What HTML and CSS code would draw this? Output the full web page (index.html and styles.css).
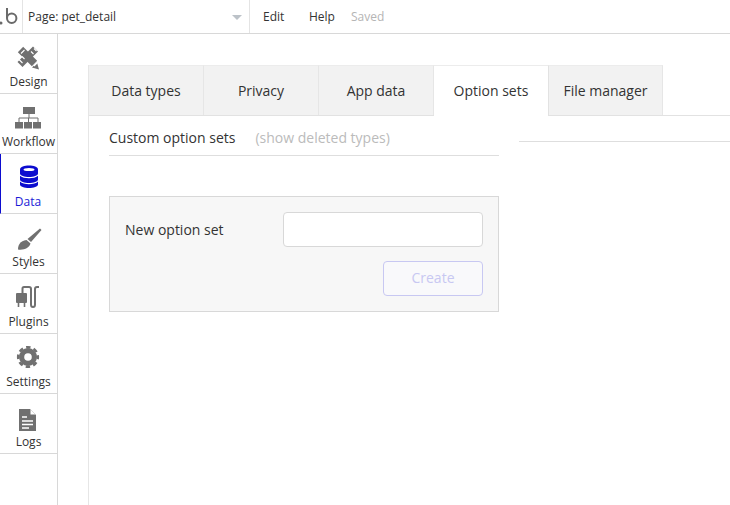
FILE: index.html
```html
<!DOCTYPE html>
<html lang="en">
<head>
    <meta charset="UTF-8">
    <meta name="viewport" content="width=device-width, initial-scale=1.0">
    <title>Data - Option sets</title>
    <link rel="stylesheet" href="styles.css">
</head>
<body>
    <header class="topbar">
        <div class="logo">
            <svg width="22" height="33" viewBox="0 0 22 33">
                <circle cx="1" cy="23" r="1.500" fill="#6a6a6a"/>
                <path d="M7 8v10" stroke="#6a6a6a" stroke-width="2" fill="none"/>
                <circle cx="11.700" cy="18.300" r="4.700" stroke="#6a6a6a" stroke-width="2" fill="none"/>
            </svg>
        </div>
        <div class="page-select">
            <span>Page: pet_detail</span>
            <span class="caret"></span>
        </div>
        <nav class="menu">
            <span class="menu-edit">Edit</span>
            <span class="menu-help">Help</span>
            <span class="saved">Saved</span>
        </nav>
    </header>

    <div class="main">
        <aside class="sidebar">
            <div class="side-item">
                <svg class="side-icon" viewBox="0 0 26 26">
                    <path d="M5.500 4.500 19.500 18.500" stroke="#707070" stroke-width="7.500" fill="none"/>
                    <path d="M22 22.500 24 24.500 17 22.500 22 17.500 24 24.500Z" fill="#707070"/>
                    <path d="M20.500 4 5 19.500" stroke="#707070" stroke-width="7" fill="none"/>
                    <path d="M6 8.500 9.500 5M19 21 22.500 17.500M4 14.500 7.500 18M7 11.500 9.500 14M16 6.500 18.500 9M19 3.500 21.500 6" stroke="#fff" stroke-width="1.100" fill="none"/>
                </svg>
                <span>Design</span>
            </div>
            <div class="side-item">
                <svg class="side-icon" viewBox="0 0 26 26">
                    <path d="M14 9v4M4 17v-4h19v4M13.500 13v4" stroke="#707070" stroke-width="1" fill="none"/>
                    <g fill="#707070">
                        <rect x="8" y="2" width="12" height="7"/>
                        <rect x="0" y="17" width="8" height="6.500"/>
                        <rect x="9" y="17" width="8" height="6.500"/>
                        <rect x="18" y="17" width="8" height="6.500"/>
                    </g>
                </svg>
                <span>Workflow</span>
            </div>
            <div class="side-item active">
                <svg class="side-icon" viewBox="0 0 26 26">
                    <g fill="#0c0ccf">
                        <path d="M5 4.500C5 1.800 9.500 0.500 14 0.500S23 1.800 23 4.500V8.500C23 10.800 18.500 12 14 12S5 10.800 5 8.500Z"/>
                        <path d="M5 10.800C6.500 12.500 10.500 13.300 14 13.300S21.500 12.500 23 10.800V14.500C23 16.800 18.500 18 14 18S5 16.800 5 14.500Z"/>
                        <path d="M5 16.500C6.500 18.200 10.500 19.200 14 19.200S21.500 18.200 23 16.500V19.500C23 21.800 18.500 23 14 23S5 21.800 5 19.500Z"/>
                    </g>
                    <ellipse cx="14" cy="4.500" rx="5.500" ry="1.600" fill="#fff"/>
                </svg>
                <span>Data</span>
            </div>
            <div class="side-item">
                <svg class="side-icon" viewBox="0 0 26 26">
                    <path d="M25 3.500 26.500 5 16 17 12.500 14Z" fill="#707070"/>
                    <path d="M11.500 15 15.500 18.500C14.500 22.500 9 25.500 3 24.500 3 20 5 16 11.500 15Z" fill="#707070"/>
                </svg>
                <span>Styles</span>
            </div>
            <div class="side-item">
                <svg class="side-icon" viewBox="0 0 26 26">
                    <path d="M7.500 8V3.500Q7.500 2 9 2H14Q16 2 16 4V19.500Q16 22 18 22T20 19.500V4Q20 2 22 2H24" stroke="#707070" stroke-width="2" fill="none"/>
                    <rect x="1" y="8" width="11" height="10" rx="1" fill="#707070"/>
                    <path d="M3.500 18v4M9.500 18v4" stroke="#707070" stroke-width="1.600"/>
                </svg>
                <span>Plugins</span>
            </div>
            <div class="side-item">
                <svg class="side-icon" viewBox="0 0 26 26">
                    <circle cx="13" cy="12" r="9" fill="#707070"/>
                    <circle cx="13" cy="12" r="9.800" fill="none" stroke="#707070" stroke-width="2.600" stroke-dasharray="4.400 3.300" stroke-dashoffset="2.200"/>
                    <circle cx="13" cy="12" r="3.800" fill="#fff"/>
                </svg>
                <span>Settings</span>
            </div>
            <div class="side-item">
                <svg class="side-icon" viewBox="0 0 26 26">
                    <path d="M4 4H15L21 10V26H4Z" fill="#707070"/>
                    <path d="M15.500 4.500V9.500H20.500Z" fill="#fff"/>
                    <path d="M7 12H12M7 16H18M7 19.500H18M7 23H14" stroke="#fff" stroke-width="1.300"/>
                </svg>
                <span>Logs</span>
            </div>
        </aside>

        <main class="content">
            <div class="pane">
                <div class="tabs">
                    <div class="tab">Data types</div>
                    <div class="tab">Privacy</div>
                    <div class="tab">App data</div>
                    <div class="tab selected">Option sets</div>
                    <div class="tab last">File manager</div>
                </div>
                <div class="sets">
                    <div class="sets-col">
                        <div class="sets-head">
                            <span>Custom option sets</span>
                            <span class="show-deleted">(show deleted types)</span>
                        </div>
                        <div class="new-set">
                            <div class="new-row">
                                <label for="set-name">New option set</label>
                                <input type="text" id="set-name">
                            </div>
                            <button disabled>Create</button>
                        </div>
                    </div>
                    <div class="side-rule"></div>
                </div>
            </div>
        </main>
    </div>
</body>
</html>
```

FILE: styles.css
```css
* {
    box-sizing: border-box;
}
body {
    font-family: "Open Sans", sans-serif;
    font-size: 14px;
    color: #333;
    background-color: #fff;
    margin: 0;
    height: 505px;
    overflow: hidden;
}
.topbar {
    display: flex;
    height: 34px;
    border-bottom: 1px solid #d8d8d8;
    font-size: 12px;
    line-height: 33px;
}
.logo {
    width: 23px;
    height: 33px;
    border-right: 1px solid #e4e4e4;
}
.logo svg {
    display: block;
}
.page-select {
    display: flex;
    justify-content: space-between;
    align-items: center;
    width: 227px;
    padding: 0 7px 0 5px;
    border-right: 1px solid #e4e4e4;
}
.caret {
    border-left: 5px solid transparent;
    border-right: 5px solid transparent;
    border-top: 5px solid #bcc2c8;
    margin-top: 2px;
}
.menu {
    display: flex;
    padding-left: 13px;
}
.menu-edit {
    width: 46px;
}
.menu-help {
    width: 42px;
}
.saved {
    color: #b5b5b5;
}
.main {
    display: flex;
    height: 471px;
}
.sidebar {
    width: 58px;
    border-right: 1px solid #d8d8d8;
}
.side-item {
    display: flex;
    flex-direction: column;
    align-items: center;
    height: 60px;
    padding-top: 11px;
    border-bottom: 1px solid #d8d8d8;
    font-size: 12px;
    line-height: 16px;
}
.side-item.active {
    color: #1a1ad6;
    border-left: 1px solid #0c0ccf;
    padding-right: 2px;
}
.side-icon {
    width: 26px;
    height: 26px;
    margin: 0 1px 3px 0;
    flex: none;
    overflow: visible;
}
.content {
    flex: 1;
    padding: 31px 0 0 30px;
}
.pane {
    height: 100%;
    border-left: 1px solid #e6e6e6;
}
.tabs {
    display: flex;
    height: 51px;
    border-bottom: 1px solid #e2e2e2;
}
.tab {
    width: 115px;
    height: 50px;
    line-height: 49px;
    text-align: center;
    background-color: #f2f2f2;
    border-top: 1px solid #ececec;
    border-right: 1px solid #e6e6e6;
}
.tab.selected {
    height: 51px;
    background-color: #fff;
    border-right: 1px solid #e2e2e2;
}
.tab.last {
    width: 114px;
}
.sets {
    display: flex;
    padding-left: 20px;
}
.sets-col {
    width: 390px;
}
.sets-head {
    display: flex;
    height: 40px;
    padding-top: 12px;
    line-height: 20px;
    border-bottom: 1px solid #dedede;
}
.show-deleted {
    margin-left: 20px;
    color: #bbb;
}
.side-rule {
    flex: 1;
    height: 1px;
    margin: 25px 0 0 20px;
    background-color: #dedede;
}
.new-set {
    display: flex;
    flex-direction: column;
    align-items: flex-end;
    height: 116px;
    margin-top: 40px;
    padding: 15px;
    background-color: #f7f7f7;
    border: 1px solid #d8d8d8;
}
.new-row {
    display: flex;
    justify-content: space-between;
    align-items: center;
    width: 100%;
}
input[type="text"] {
    width: 200px;
    height: 35px;
    background-color: #fff;
    border: 1px solid #d8d8d8;
    border-radius: 4px;
}
button {
    width: 100px;
    height: 35px;
    margin-top: 14px;
    padding: 0 0 2px;
    font-family: "Open Sans", sans-serif;
    font-size: 14px;
    color: #c8c8f2;
    background-color: #f9f9fb;
    border: 1px solid #c8c8f2;
    border-radius: 4px;
}
```
